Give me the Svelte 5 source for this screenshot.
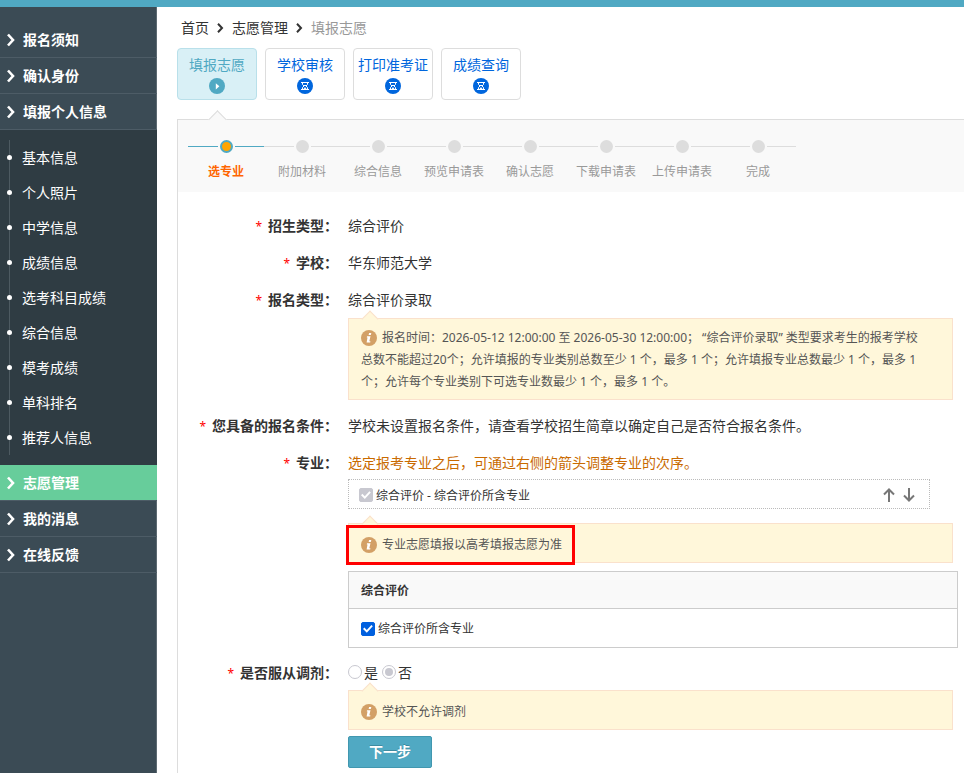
<script lang="ts">
	const personalItems: string[] = [
		'基本信息',
		'个人照片',
		'中学信息',
		'成绩信息',
		'选考科目成绩',
		'综合信息',
		'模考成绩',
		'单科排名',
		'推荐人信息'
	];

	const menuTop: string[] = ['报名须知', '确认身份', '填报个人信息'];
	const menuBottom: string[] = ['志愿管理', '我的消息', '在线反馈'];
	const tabs: string[] = ['填报志愿', '学校审核', '打印准考证', '成绩查询'];
	const steps: string[] = [
		'选专业',
		'附加材料',
		'综合信息',
		'预览申请表',
		'确认志愿',
		'下载申请表',
		'上传申请表',
		'完成'
	];

	let activeMenu: string = '志愿管理';
	let activeTab: number = 0;
	let activeStep: number = 0;
	let majorChecked: boolean = true;
</script>

<div class="topbar"></div>
<div class="page">
	<nav class="sidebar">
		{#each menuTop as item}
			<a class="menu-item" href="#menu">
				<svg class="menu-arrow" viewBox="0 0 8 14"><path d="M1 1.5 6 7 1 12.5" /></svg>
				{item}
			</a>
		{/each}
		<div class="submenu">
			<ul>
				{#each personalItems as item}
					<li><a href="#info">{item}</a></li>
				{/each}
			</ul>
		</div>
		{#each menuBottom as item}
			<a class="menu-item" class:active={item === activeMenu} href="#menu">
				<svg class="menu-arrow" viewBox="0 0 8 14"><path d="M1 1.5 6 7 1 12.5" /></svg>
				{item}
			</a>
		{/each}
	</nav>

	<main>
		<div class="breadcrumb">
			<a href="#home">首页</a>
			<svg viewBox="0 0 7 10"><path d="M1 .8 5 5 1 9.2" /></svg>
			<a href="#manage">志愿管理</a>
			<svg viewBox="0 0 7 10"><path d="M1 .8 5 5 1 9.2" /></svg>
			<span>填报志愿</span>
		</div>

		<div class="tabs">
			{#each tabs as tab, i}
				<a class="tab" class:current={i === activeTab} href="#tab">
					{tab}
					<svg viewBox="0 0 16 16">
						<circle cx="8" cy="8" r="8" />
						{#if i === activeTab}
							<path class="solid" d="M6.8 5.2 10.4 8.3 6.8 11.4Z" />
						{:else}
							<path class="line" d="M4 4.5h8M4 11.5h8M5.5 4.5v2L7 8 5.5 9.5v2M10.5 4.5v2L9 8l1.5 1.5v2" />
							<path class="solid" d="M7 7h2v1H7ZM8 9l1.5 2h-3Z" />
						{/if}
					</svg>
				</a>
			{/each}
		</div>

		<section class="panel">
			<ol class="steps">
				{#each steps as step, i}
					<li class:current={i === activeStep}>
						<span class="track"><i></i></span>
						{step}
					</li>
				{/each}
			</ol>

			<form on:submit|preventDefault>
				<div class="row">
					<div class="label"><em>*</em>招生类型：</div>
					<div class="value">综合评价</div>
				</div>
				<div class="row">
					<div class="label"><em>*</em>学校：</div>
					<div class="value">华东师范大学</div>
				</div>
				<div class="row">
					<div class="label"><em>*</em>报名类型：</div>
					<div class="value">
						综合评价录取
						<div class="note">
							<svg viewBox="0 0 16 16">
								<circle cx="8" cy="8" r="8" />
								<path d="M8.1 2.9h2.2l-.5 2H7.6ZM6 6.2h3.5l-1.2 5h1.1l-.2 1.2H5.6l.9-5H5.8Z" />
							</svg>报名时间：2026-05-12 12:00:00 至 2026-05-30 12:00:00； “综合评价录取” 类型要求考生的报考学校总数不能超过20个；允许填报的专业类别总数至少 1 个，最多 1 个；允许填报专业总数最少 1 个，最多 1 个；允许每个专业类别下可选专业数最少 1 个，最多 1 个。
						</div>
					</div>
				</div>
				<div class="row">
					<div class="label"><em>*</em>您具备的报名条件：</div>
					<div class="value">学校未设置报名条件，请查看学校招生简章以确定自己是否符合报名条件。</div>
				</div>
				<div class="row">
					<div class="label"><em>*</em>专业：</div>
					<div class="value">
						<span class="tip">选定报考专业之后，可通过右侧的箭头调整专业的次序。</span>
						<div class="chosen">
							<label><input type="checkbox" checked disabled />综合评价 - 综合评价所含专业</label>
							<button type="button" class="move" aria-label="上移">
								<svg viewBox="0 0 12 14"><path d="M6 14V1.5M1 6.5 6 1.5 11 6.5" /></svg>
							</button>
							<button type="button" class="move" aria-label="下移">
								<svg viewBox="0 0 12 14"><path d="M6 0v12.5M1 7.5l5 5 5-5" /></svg>
							</button>
						</div>
						<div class="note short">
							<svg viewBox="0 0 16 16">
								<circle cx="8" cy="8" r="8" />
								<path d="M8.1 2.9h2.2l-.5 2H7.6ZM6 6.2h3.5l-1.2 5h1.1l-.2 1.2H5.6l.9-5H5.8Z" />
							</svg>专业志愿填报以高考填报志愿为准
							<div class="mark"></div>
						</div>
						<table>
							<thead>
								<tr><th>综合评价</th></tr>
							</thead>
							<tbody>
								<tr>
									<td>
										<label><input type="checkbox" bind:checked={majorChecked} />综合评价所含专业</label>
									</td>
								</tr>
							</tbody>
						</table>
					</div>
				</div>
				<div class="row adjust">
					<div class="label"><em>*</em>是否服从调剂：</div>
					<div class="value">
						<div class="radios">
							<label><input type="radio" name="adjust" disabled />是</label>
							<label><input type="radio" name="adjust" checked disabled />否</label>
						</div>
						<div class="note short">
							<svg viewBox="0 0 16 16">
								<circle cx="8" cy="8" r="8" />
								<path d="M8.1 2.9h2.2l-.5 2H7.6ZM6 6.2h3.5l-1.2 5h1.1l-.2 1.2H5.6l.9-5H5.8Z" />
							</svg>学校不允许调剂
						</div>
						<button type="submit" class="next">下一步</button>
					</div>
				</div>
			</form>
		</section>
	</main>
</div>

<style>
	:global(body) {
		background: #fff;
		color: #333;
		font: 14px/22px 'Noto Sans', 'Noto Sans CJK SC', sans-serif;
	}

	:global(#app) {
		display: flex;
		flex-direction: column;
		min-height: 100vh;
	}

	* {
		box-sizing: border-box;
	}

	a {
		color: inherit;
		text-decoration: none;
	}

	ul,
	ol {
		margin: 0;
		padding: 0;
		list-style: none;
	}

	.topbar {
		height: 7px;
		background: #50a9c3;
	}

	.page {
		display: flex;
		flex: 1;
	}

	/* Left menu */
	.sidebar {
		flex: none;
		width: 157px;
		padding-top: 15px;
		background: #3b4b55;
		box-shadow: inset -1px 0 #5d6a72;
		color: #fff;
	}

	.menu-item {
		display: flex;
		align-items: center;
		gap: 8px;
		height: 36px;
		padding-left: 7px;
		border-bottom: 1px solid #4d5c66;
		font-weight: bold;
	}

	.menu-item.active {
		background: #67cd9b;
	}

	.menu-arrow {
		width: 8px;
		height: 14px;
		fill: none;
		stroke: #fff;
		stroke-width: 2.6;
	}

	.submenu {
		padding: 10px 0 10px 9px;
		background: #2f3c43;
	}

	.submenu ul {
		border-left: 1px solid #4d5a61;
	}

	.submenu li {
		position: relative;
		padding-left: 12px;
		line-height: 35px;
	}

	.submenu li::before {
		content: '';
		position: absolute;
		top: 15px;
		left: -3px;
		width: 5px;
		height: 5px;
		border-radius: 50%;
		background: #fff;
	}

	/* Content */
	main {
		display: flex;
		flex: 1;
		flex-direction: column;
		min-width: 0;
		padding: 10px 0 0 20px;
	}

	.breadcrumb {
		display: flex;
		align-items: center;
		gap: 8px;
		padding-left: 4px;
	}

	.breadcrumb span {
		color: #999;
	}

	.breadcrumb svg {
		width: 7px;
		height: 10px;
		fill: none;
		stroke: #333;
		stroke-width: 2;
	}

	.tabs {
		display: flex;
		gap: 8px;
		margin-top: 9px;
	}

	.tab {
		display: flex;
		flex-direction: column;
		align-items: center;
		width: 80px;
		height: 52px;
		padding-top: 5px;
		border: 1px solid #ddd;
		border-radius: 4px;
		color: #0066dd;
		white-space: nowrap;
	}

	.tab.current {
		border-color: #b9e0ea;
		background: #d9f0f6;
		color: #50a9c3;
	}

	.tab svg {
		width: 16px;
		height: 16px;
		margin-top: 2px;
		fill: currentColor;
	}

	.tab .solid {
		fill: #fff;
	}

	.tab .line {
		fill: none;
		stroke: #fff;
	}

	.panel {
		position: relative;
		flex: 1;
		margin-top: 19px;
		border: solid #ddd;
		border-width: 1px 0 0 1px;
	}

	.panel::before {
		content: '';
		position: absolute;
		top: -7px;
		left: 33px;
		width: 12px;
		height: 12px;
		border: solid #ddd;
		border-width: 1px 0 0 1px;
		background: #f9f9f9;
		transform: rotate(45deg);
	}

	.steps {
		display: flex;
		height: 72px;
		padding: 18px 10px 0;
		background: #f9f9f9;
		color: #999;
		font-size: 12px;
	}

	.steps li {
		width: 76px;
		text-align: center;
		white-space: nowrap;
	}

	.track {
		display: flex;
		justify-content: center;
		align-items: center;
		gap: 2px;
		height: 17px;
		margin-bottom: 6px;
	}

	.track::before,
	.track::after {
		content: '';
		flex: 1;
		height: 1px;
		background: #ddd;
	}

	.track i {
		width: 13px;
		height: 13px;
		border-radius: 50%;
		background: #ddd;
	}

	.steps .current {
		color: #ff6600;
		font-weight: bold;
	}

	.current .track::before,
	.current .track::after {
		background: #50a9c3;
	}

	.current .track i {
		border: 2px solid #50a9c3;
		background: #ffa500;
	}

	/* Form */
	form {
		display: flex;
		flex-direction: column;
		gap: 14px;
		padding: 22px 6px 5px 0;
	}

	.row {
		display: flex;
		gap: 10px;
		line-height: 23px;
	}

	.row.adjust {
		margin-top: -1px;
	}

	.label {
		flex: none;
		width: 160px;
		font-weight: bold;
		text-align: right;
		white-space: nowrap;
	}

	.label em {
		margin-right: 6px;
		color: #f00;
		font-size: 12px;
		font-style: normal;
		font-weight: normal;
		line-height: 1;
	}

	.value {
		flex: 1;
		min-width: 0;
	}

	.tip {
		color: #c96a00;
	}

	.note {
		position: relative;
		margin: 7px 5px 0 0;
		padding: 8px 26px 6px 12px;
		border: 1px solid #fae1cc;
		background: #fff7da;
		color: #555;
		font-size: 12px;
		line-height: 22px;
	}

	.note.short {
		padding-top: 10px;
	}

	.note::before {
		content: '';
		position: absolute;
		top: -6px;
		left: 15px;
		width: 11px;
		height: 11px;
		border: solid #fae1cc;
		border-width: 1px 0 0 1px;
		background: #fff7da;
		transform: rotate(45deg);
	}

	.note svg {
		width: 16px;
		height: 16px;
		margin-right: 5px;
		vertical-align: -4px;
	}

	.note circle {
		fill: #d3a066;
	}

	.note path {
		fill: #fff;
	}

	/* Red frame round the notice */
	.mark {
		position: absolute;
		top: 1px;
		left: -3px;
		width: 229px;
		height: 40px;
		border: 3px solid #f00;
	}

	.chosen {
		display: flex;
		align-items: center;
		gap: 8px;
		height: 30px;
		margin: 5px 28px 14px 0;
		padding: 2px 14px 0 10px;
		border: 1px dotted #bbb;
		font-size: 12px;
	}

	.chosen label {
		flex: 1;
	}

	label {
		display: inline-flex;
		align-items: center;
		gap: 3px;
	}

	input {
		flex: none;
		display: grid;
		place-items: center;
		width: 14px;
		height: 14px;
		margin: 0;
		border: 1px solid #c8c8d0;
		appearance: none;
	}

	input[type='checkbox'] {
		border-radius: 2px;
	}

	input[type='checkbox']:checked {
		border-color: #0060df;
		background: #0060df;
	}

	input[type='checkbox']:disabled {
		border-color: #c8c8d0;
		background: #c8c8d0;
	}

	input[type='checkbox']:checked::before {
		content: '';
		width: 10px;
		height: 10px;
		background: #fff;
		clip-path: polygon(0 52%, 14% 38%, 38% 62%, 84% 12%, 98% 26%, 38% 90%);
	}

	input[type='radio'] {
		border-radius: 50%;
	}

	input[type='radio']:checked::before {
		content: '';
		width: 8px;
		height: 8px;
		border-radius: 50%;
		background: #c8c8d0;
	}

	.move {
		display: flex;
		padding: 0;
		border: 0;
		background: none;
	}

	.move svg {
		width: 12px;
		height: 14px;
		fill: none;
		stroke: #777;
		stroke-width: 2;
	}

	table {
		width: 100%;
		margin-top: 8px;
		border-collapse: collapse;
		font-size: 12px;
	}

	th,
	td {
		border: 1px solid #ccc;
		text-align: left;
	}

	th {
		height: 37px;
		padding: 0 12px;
		background: #f9f9f9;
	}

	td {
		height: 39px;
		padding: 2px 12px 0;
	}

	.radios {
		display: flex;
		gap: 4px;
		height: 22px;
	}

	.radios label {
		gap: 2px;
	}

	.next {
		display: block;
		width: 84px;
		height: 32px;
		margin-top: 6px;
		padding: 0;
		border: 1px solid #4197af;
		border-radius: 2px;
		background: #50a9c3;
		color: #fff;
		font: bold 14px/22px 'Noto Sans', 'Noto Sans CJK SC', sans-serif;
		text-shadow: 0 -1px 0 #3d8ba1;
	}
</style>
